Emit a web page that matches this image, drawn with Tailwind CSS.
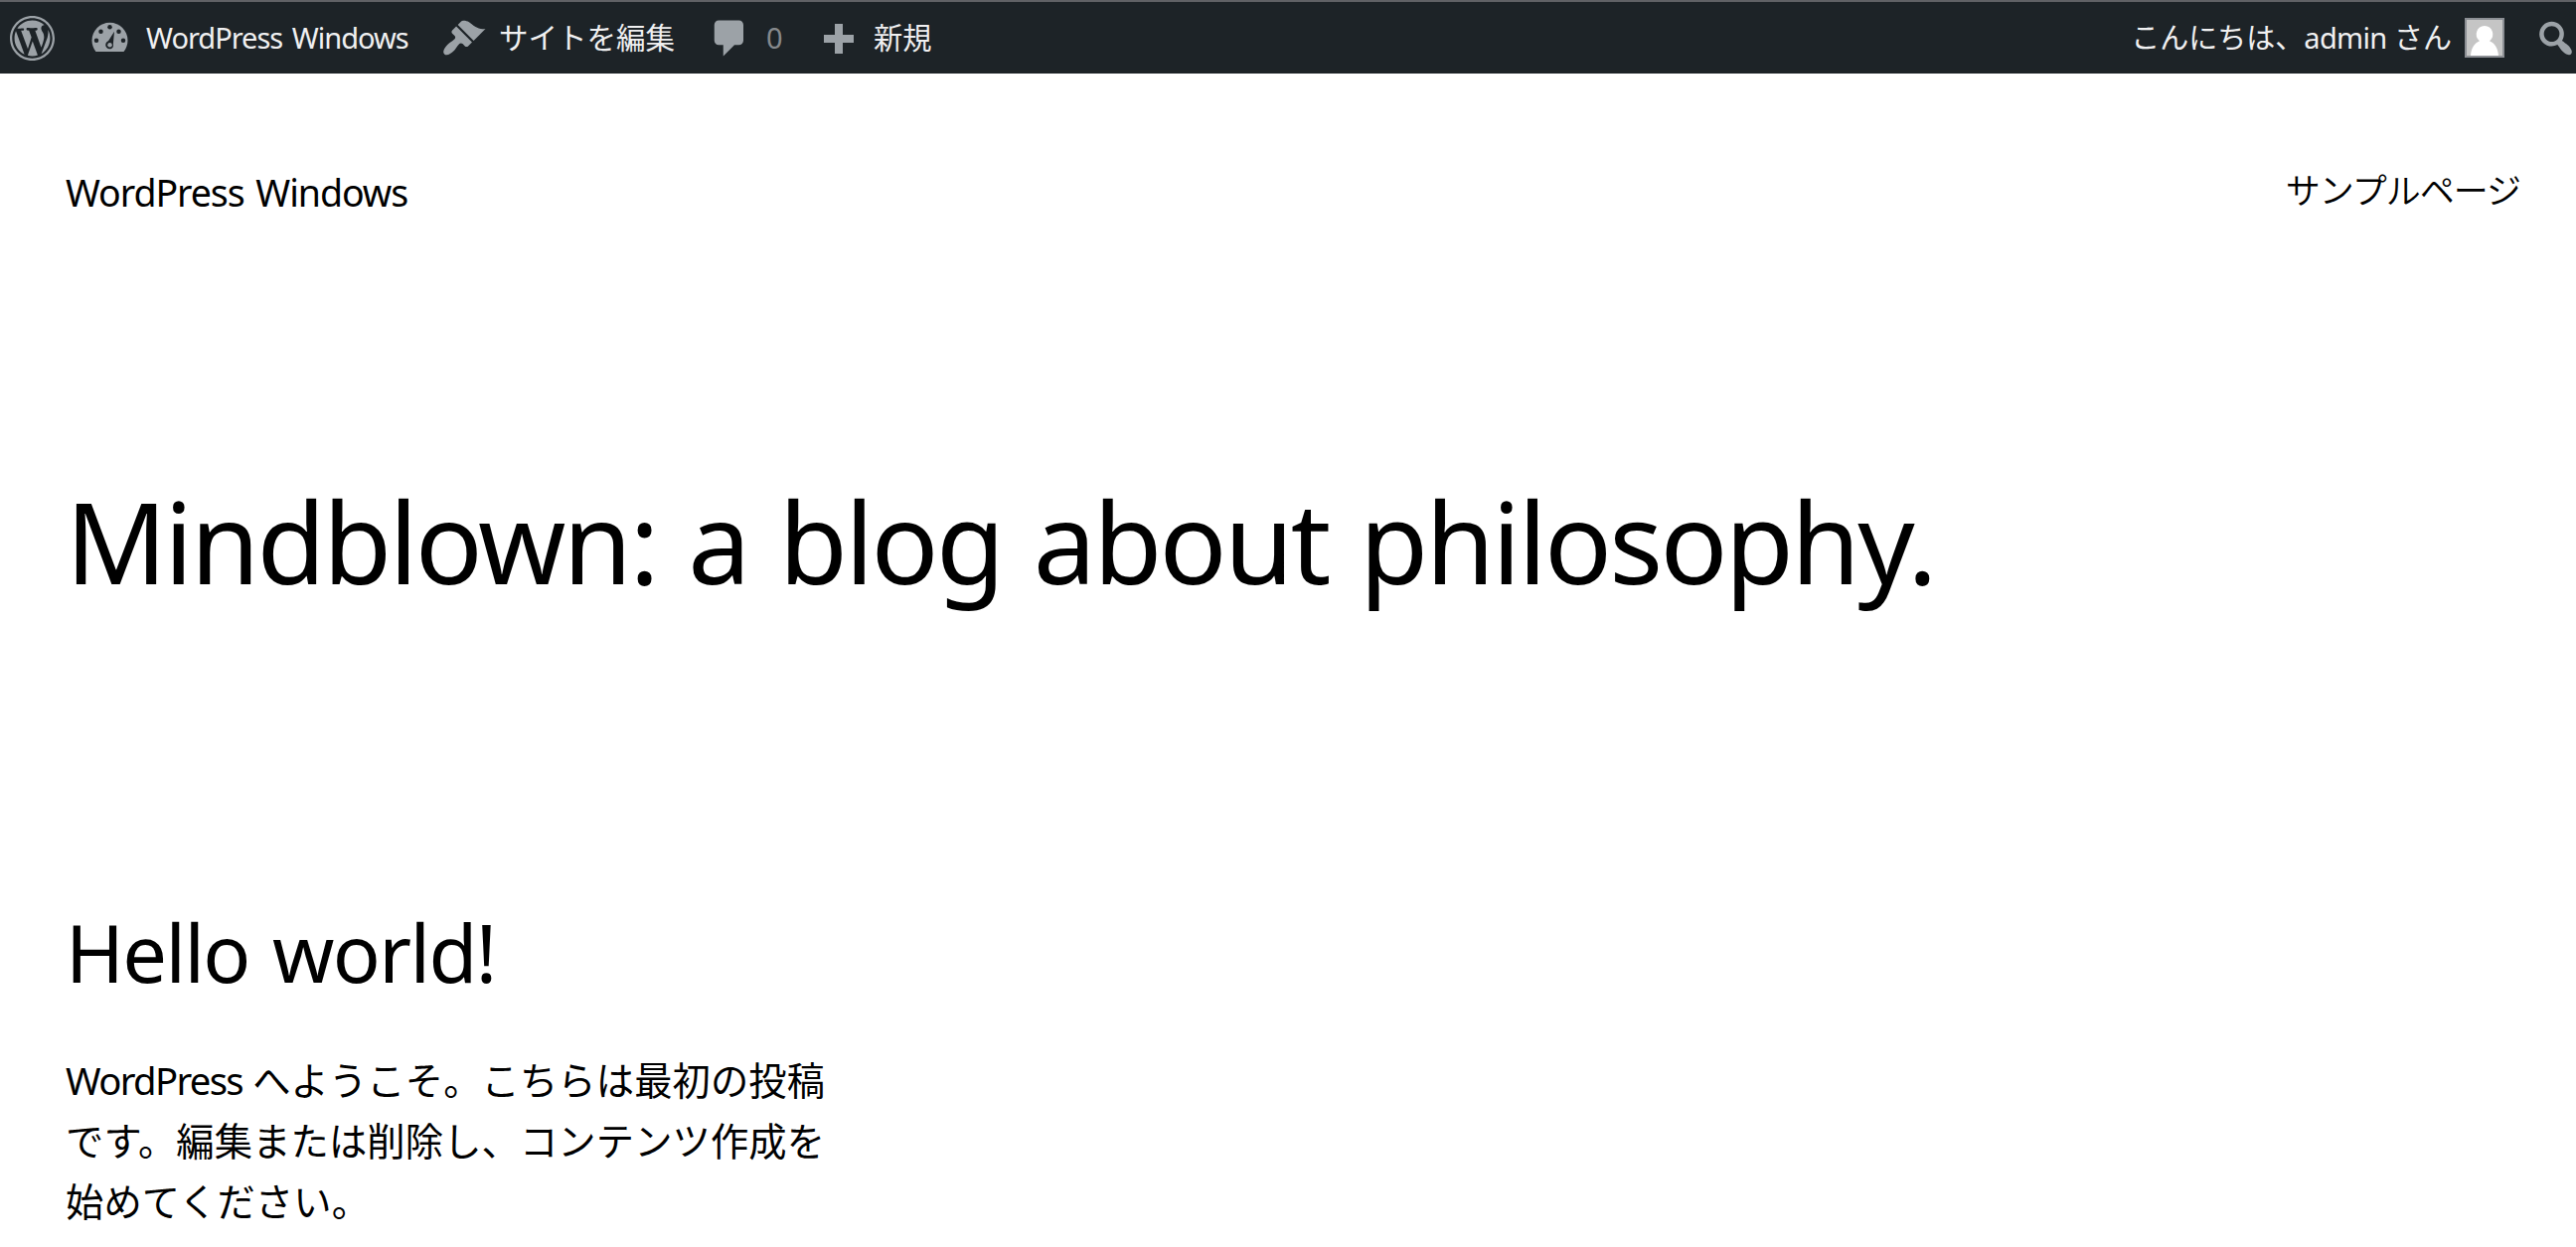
<!DOCTYPE html>
<html lang="ja">
<head>
    <meta charset="UTF-8">
    <meta name="viewport" content="width=device-width, initial-scale=1.0">
    <script src="https://cdn.jsdelivr.net/npm/@tailwindcss/browser@4"></script>
    <title>WordPress Windows</title>
</head>

<body class="h-[1255px] overflow-hidden bg-white font-['Noto_Sans','Noto_Sans_CJK_JP',sans-serif] text-black">
    <!-- admin bar -->
    <div class="flex h-[74px] items-center justify-between border-t-2 border-[#606165] bg-[#1d2327] pl-[10px] text-[29px] leading-[72px] whitespace-nowrap text-[#f0f0f1]">
        <div class="flex items-center">
            <a href="#" class="mr-[33px]">
                <svg class="size-[45px] fill-[#9ca2a7]" viewBox="0 0 20 20"><path d="M20 10c0-5.52-4.48-10-10-10S0 4.48 0 10s4.48 10 10 10 10-4.48 10-10zM10 1.01c4.97 0 8.99 4.02 8.99 8.99s-4.02 8.99-8.99 8.99S1.01 14.97 1.01 10 5.03 1.01 10 1.01zM8.01 14.82L4.96 6.61c.49-.03 1.05-.08 1.05-.08.43-.05.38-1.01-.06-.99 0 0-1.29.1-2.13.1-.15 0-.33 0-.52-.01 1.44-2.17 3.9-3.6 6.7-3.6 2.09 0 3.99.79 5.41 2.09-.6-.08-1.45.35-1.45 1.42 0 .66.38 1.22.79 1.88.31.54.5 1.22.5 2.21 0 1.34-1.27 4.48-1.27 4.48l-2.71-7.5c.48-.03.75-.16.75-.16.43-.05.38-1.1-.05-1.08 0 0-1.3.11-2.14.11-.78 0-2.11-.11-2.11-.11-.43-.02-.48 1.06-.05 1.08l.84.08 1.12 3.04zm6.02 2.15L16.64 10s.67-1.69.39-3.81c.63 1.14.94 2.42.94 3.81 0 2.96-1.56 5.58-3.94 6.97zM2.68 6.77L6.5 17.25c-2.67-1.3-4.47-4.08-4.47-7.25 0-1.16.2-2.23.65-3.23zm7.45 4.53l2.29 6.25c-.75.27-1.57.42-2.42.42-.72 0-1.41-.11-2.06-.3z"/></svg>
            </a>
            <a href="#" class="flex w-[356px] items-center">
                <svg class="mr-[14px] size-[45px] shrink-0 fill-[#9ca2a7]" viewBox="0 0 20 20">
                    <path d="M3.76 16h12.48c1.1-1.37 1.76-3.11 1.76-5 0-4.42-3.58-8-8-8s-8 3.58-8 8c0 1.89.66 3.63 1.76 5z"/>
                    <g class="fill-[#1d2327]">
                        <circle cx="10" cy="5" r="1"/>
                        <circle cx="6" cy="7" r="1"/>
                        <circle cx="14" cy="7" r="1"/>
                        <circle cx="4" cy="11" r="1"/>
                        <circle cx="16" cy="11" r="1"/>
                        <path d="M12 7l-.5 5.5c.3 1.4-.5 2.3-1.5 2.3-1.1 0-1.9-.8-1.9-1.8s.7-1.6 1.3-1.9z"/>
                    </g>
                    <circle cx="10" cy="13" r="1"/>
                </svg>
                <span class="tracking-[-1px] [word-spacing:3px]">WordPress Windows</span>
            </a>
            <a href="#" class="flex w-[268px] items-center">
                <svg class="mr-[13px] size-[45px] shrink-0 fill-[#9ca2a7]" viewBox="0 0 20 20"><path d="M14.48 11.06L7.41 3.99l1.5-1.5c.5-.56 2.3-.47 3.51.32 1.21.8 1.43 1.28 2.91 2.1 1.18.64 2.45 1.26 4.45.85zm-.71.71L6.7 4.7 4.93 6.47c-.39.39-.39 1.02 0 1.41l1.06 1.06c.39.39.39 1.03 0 1.42-.6.6-1.43 1.11-2.21 1.69-.35.26-.7.53-1.01.84C1.43 14.23.4 16.08 1.4 17.07c.99 1 2.84-.03 4.18-1.36.31-.31.58-.66.85-1.02.57-.78 1.08-1.61 1.69-2.21.39-.39 1.02-.39 1.41 0l1.06 1.06c.39.39 1.02.39 1.41 0z"/></svg>
                <span class="text-[29.5px]">サイトを編集</span>
            </a>
            <a href="#" class="flex w-[110px] items-center">
                <svg class="mr-[14px] size-[45px] shrink-0 fill-[#9ca2a7]" viewBox="0 0 20 20"><path d="M5 2h9c1.1 0 2 .9 2 2v7c0 1.1-.9 2-2 2h-2l-5 5v-5H5c-1.1 0-2-.9-2-2V4c0-1.1.9-2 2-2z"/></svg>
                <span class="text-[#86898c]">0</span>
            </a>
            <a href="#" class="flex items-center">
                <svg class="mr-[12px] size-[45px] shrink-0 fill-[#9ca2a7]" viewBox="0 0 45 45"><path d="M18 8h8v11h11v8H26v11h-8V27H7v-8h11z"/></svg>
                <span class="text-[29.25px]">新規</span>
            </a>
        </div>
        <div class="flex items-center">
            <span class="mr-[13px] text-[29px]">こんにちは、<span class="tracking-[-0.7px]">admin</span> さん</span>
            <svg class="mr-[29px] size-[40px]" viewBox="0 0 40 40">
                <path fill="#8c8f94" d="M0 0h40v40H0z"/>
                <path fill="#c5c5c5" d="M2 2h36v36H2z"/>
                <path fill="#fff" d="M20 8a8.5 8.5 0 0 1 5 15.2c5 2 8.5 6.8 9 14.8H6c.5-8 4-12.8 9-14.8A8.5 8.5 0 0 1 20 8z"/>
            </svg>
            <svg class="-mr-[2px] size-[45px] fill-[#9ca2a7]" viewBox="0 0 20 20"><path d="M12.14 4.18c1.87 1.87 2.11 4.75.72 6.89.12.1.22.21.36.31.2.16.47.36.81.59.34.24.56.39.66.47.42.31.73.57.94.78.32.32.6.65.84 1 .25.35.44.69.59 1.04.14.35.21.68.18 1-.02.32-.14.59-.36.81s-.49.34-.81.36c-.31.02-.65-.04-.99-.19-.35-.14-.7-.34-1.04-.59-.35-.24-.68-.52-1-.84-.21-.21-.47-.52-.77-.93-.1-.13-.25-.35-.47-.66-.22-.32-.4-.57-.56-.78-.16-.2-.29-.35-.44-.5-2.07 1.09-4.69.76-6.44-.98-2.14-2.15-2.14-5.64 0-7.78 2.15-2.15 5.63-2.15 7.78 0zm-1.41 6.36c1.36-1.37 1.36-3.58 0-4.95-1.37-1.37-3.59-1.37-4.95 0-1.37 1.37-1.37 3.58 0 4.95 1.36 1.37 3.58 1.37 4.95 0z"/></svg>
        </div>
    </div>

    <!-- site header -->
    <header class="flex h-[150px] items-start justify-between pt-[86px] pr-[56px] pl-[66px]">
        <a href="#" class="pt-[4px] text-[37.5px] leading-[60px] tracking-[-1.05px] [word-spacing:3px]">WordPress Windows</a>
        <a href="#" class="font-['Noto_Sans_CJK_JP',sans-serif] text-[35px] leading-[60px] font-[350] tracking-[-1px]">サンプルページ</a>
    </header>

    <main class="px-[66px]">
        <h1 class="mt-[261px] text-[112.5px] leading-[120px] tracking-[-2.7px] [word-spacing:4.7px]">Mindblown: a blog about philosophy.</h1>
        <article class="mt-[308px] w-[768px]">
            <h2 class="text-[79.5px] leading-[90px] tracking-[-1.6px] [word-spacing:4px]">Hello world!</h2>
            <p class="mt-[54px] text-[38.25px] leading-[61.2px] tracking-[0.15px] whitespace-nowrap"><span class="tracking-[-1.65px]">WordPress</span> へようこそ。こちらは最初の投稿<br>です。編集または削除し、コンテンツ作成を<br>始めてください。</p>
        </article>
    </main>
</body>
</html>
